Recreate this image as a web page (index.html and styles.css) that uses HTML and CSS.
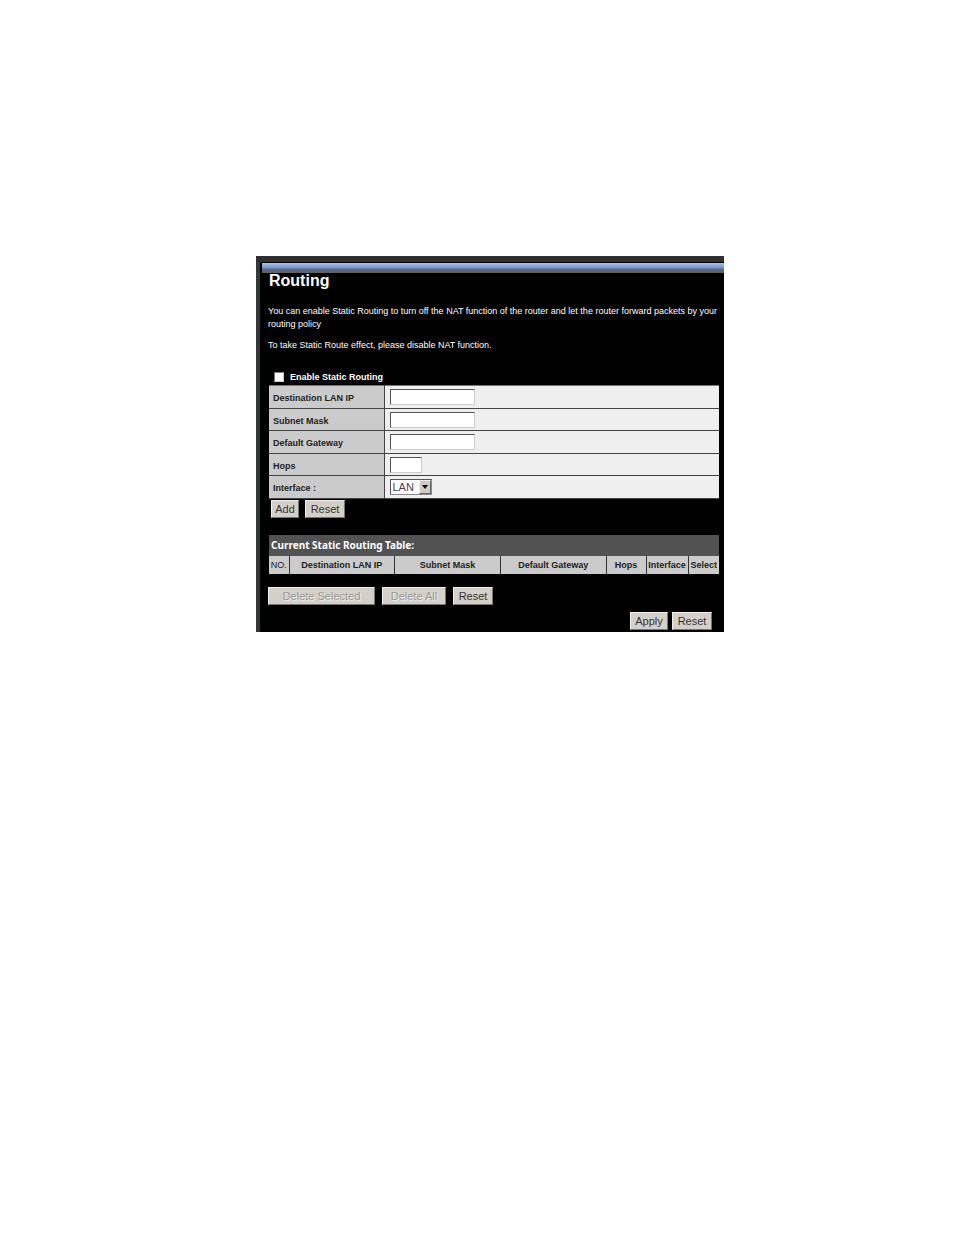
FILE: index.html
```
<!DOCTYPE html>
<html lang="en">

    <head>
        <meta charset="utf-8">
        <title>Routing</title>
        <link rel="stylesheet" href="styles.css">
    </head>

    <body>
        <main class="frame">
            <div class="bar"></div>
            <form class="content">
                <h1>Routing</h1>
                <p>You can enable Static Routing to turn off the NAT function of the router and let the router forward packets by your routing policy</p>
                <p>To take Static Route effect, please disable NAT function.</p>

                <div class="enable">
                    <input type="checkbox" id="enable">
                    <label for="enable">Enable Static Routing</label>
                </div>

                <table class="settings">
                    <tr>
                        <th><label for="dest">Destination LAN IP</label></th>
                        <td><input type="text" id="dest"></td>
                    </tr>
                    <tr>
                        <th><label for="mask">Subnet Mask</label></th>
                        <td><input type="text" id="mask"></td>
                    </tr>
                    <tr>
                        <th><label for="gateway">Default Gateway</label></th>
                        <td><input type="text" id="gateway"></td>
                    </tr>
                    <tr>
                        <th><label for="hops">Hops</label></th>
                        <td><input type="text" id="hops" class="short"></td>
                    </tr>
                    <tr>
                        <th><label for="interface">Interface :</label></th>
                        <td>
                            <span class="select">
                                <select id="interface">
                                    <option>LAN</option>
                                    <option>WAN</option>
                                </select>
                                <svg class="arrow" viewBox="0 0 10 12"><path d="M2 4h6L5 8z"/></svg>
                            </span>
                        </td>
                    </tr>
                </table>

                <div class="buttons add-row">
                    <button type="button" class="add">Add</button>
                    <button type="reset">Reset</button>
                </div>

                <table class="routes">
                    <caption>Current Static Routing Table:</caption>
                    <colgroup>
                        <col class="c-no">
                        <col class="c-addr">
                        <col class="c-addr">
                        <col class="c-addr">
                        <col class="c-hops">
                        <col class="c-if">
                        <col class="c-select">
                    </colgroup>
                    <tr>
                        <th>NO.</th>
                        <th>Destination LAN IP</th>
                        <th>Subnet Mask</th>
                        <th>Default Gateway</th>
                        <th>Hops</th>
                        <th>Interface</th>
                        <th>Select</th>
                    </tr>
                </table>

                <div class="buttons delete-row">
                    <button type="button" class="delete-selected" disabled>Delete Selected</button>
                    <button type="button" class="delete-all" disabled>Delete All</button>
                    <button type="reset">Reset</button>
                </div>

                <div class="buttons apply-row">
                    <button type="submit" class="apply">Apply</button>
                    <button type="reset">Reset</button>
                </div>
            </form>
        </main>
    </body>

</html>
```
FILE: styles.css
```
* {
    box-sizing: border-box;
}
body {
    margin: 0;
    padding: 256px 230px 0 256px;
    background-color: #fff;
    font-family: "Liberation Sans", Arial, sans-serif;
    font-size: 9px;
}
.frame {
    padding-left: 6px;
    border-top: 6px solid #2f2f2f;
    background: linear-gradient(to right, #353838 4px, #000 4px);
    color: #fff;
}
.bar {
    height: 11px;
    border-top: 1px solid #000;
    background: linear-gradient(#a5c0f0, #7094d6 50%, #66687a 60%, #606060);
}
.content {
    padding: 0 5px 2px 7px;
}
h1 {
    margin: 0 0 16px;
    font-size: 16px;
    line-height: 16px;
}
p {
    margin: 0 0 8px -1px;
    line-height: 13px;
}
.enable {
    display: flex;
    align-items: center;
    gap: 6px;
    height: 17px;
    margin: 16px 0 0 5px;
    font-weight: bold;
}
input[type="checkbox"] {
    appearance: none;
    width: 10px;
    height: 10px;
    margin: 0;
    border: 1px solid;
    border-color: #777 #ccc #ccc #777;
    background-color: #fff;
}
input[type="checkbox"]:checked {
    background-color: #333;
}
table {
    width: 100%;
    border-collapse: collapse;
    table-layout: fixed;
    color: #222;
}
th {
    background-color: #cbcbcb;
}
.settings {
    border-top: 1px solid #777;
}
.settings th,
.settings td {
    height: 23px;
    padding: 0 5px;
    border-bottom: 1px solid #444;
}
.settings tr:nth-child(even) th,
.settings tr:nth-child(even) td {
    height: 22px;
}
.settings th {
    width: 115px;
    padding: 2px 4px 0;
    border-right: 1px solid #444;
    text-align: left;
}
.settings td {
    background-color: #efefef;
}
input[type="text"] {
    display: block;
    width: 85px;
    height: 16px;
    padding: 0 2px;
    border: 1px solid;
    border-color: #555 #ccc #ccc #555;
    background-color: #fff;
    font: inherit;
}
input[type="text"].short {
    width: 32px;
}
.select {
    display: block;
    position: relative;
    width: 42px;
    height: 16px;
}
select {
    appearance: none;
    display: block;
    width: 100%;
    height: 100%;
    padding: 0 2px;
    border: 1px solid;
    border-color: #555 #888 #888 #555;
    border-radius: 0;
    background-color: #fff;
    color: #533a55;
    font: 11px "Liberation Sans", Arial, sans-serif;
}
.arrow {
    position: absolute;
    top: 1px;
    right: 1px;
    width: 12px;
    height: 14px;
    border: 1px solid;
    border-color: #eee #666 #666 #eee;
    background-color: #d0ccc4;
    pointer-events: none;
}
.buttons {
    display: flex;
}
button {
    width: 40px;
    height: 18px;
    padding: 0;
    border: 1px solid;
    border-color: #f0eeea #77746f #77746f #f0eeea;
    background-color: #d4d0c8;
    color: #3a3038;
    font: 11px "Liberation Sans", Arial, sans-serif;
}
button:disabled {
    color: #9b9892;
    text-shadow: 1px 1px #eee;
}
.add-row {
    gap: 6px;
    padding: 1px 0 17px 2px;
}
.add {
    width: 28px;
}
.routes caption {
    height: 21px;
    padding-left: 2px;
    background-color: #525252;
    color: #fff;
    font: bold 10px/20px "Noto Sans", Tahoma, sans-serif;
    text-align: left;
}
.routes th {
    height: 18px;
    padding: 0;
    border-left: 1px solid #333;
}
.routes th:first-child {
    border-left: none;
    font-weight: normal;
}
.c-no {
    width: 20px;
}
.c-hops {
    width: 40px;
}
.c-if {
    width: 42px;
}
.c-select {
    width: 31px;
}
.delete-row {
    gap: 7px;
    margin: 13px 0 7px -1px;
}
.delete-selected {
    width: 107px;
}
.delete-all {
    width: 64px;
}
.apply-row {
    justify-content: flex-end;
    gap: 4px;
    padding-right: 7px;
}
.apply {
    width: 38px;
}
```
